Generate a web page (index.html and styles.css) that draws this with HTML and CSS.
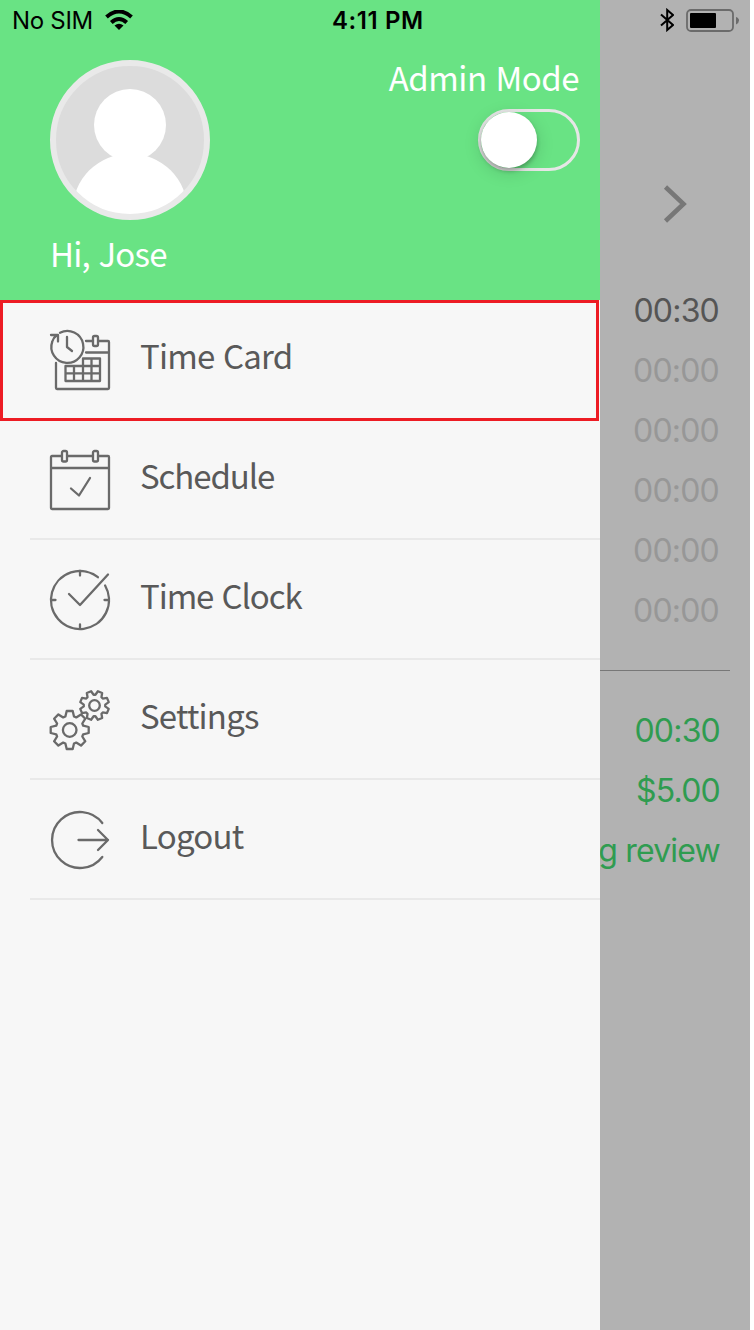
FILE: index.html
```
<!DOCTYPE html>
<html lang="en">
<head>
    <meta charset="UTF-8">
    <meta name="viewport" content="width=device-width, initial-scale=1.0">
    <title>Time Card</title>
    <link rel="stylesheet" href="styles.css">
</head>
<body>
    <div class="screen">
        <!-- Time card page behind the drawer -->
        <main class="page">
            <div class="week-nav">
                <svg class="chevron" viewBox="0 0 24 40"><path d="M2.500 3L20.500 20L2.500 37"/></svg>
            </div>
            <div class="row dark">00:30</div>
            <div class="row">00:00</div>
            <div class="row">00:00</div>
            <div class="row">00:00</div>
            <div class="row">00:00</div>
            <div class="row">00:00</div>
            <hr class="line">
            <div class="row green">00:30</div>
            <div class="row green">$5.00</div>
            <div class="row green">Pending review</div>
        </main>

        <nav class="drawer">
            <header class="profile">
                <div class="user">
                    <svg class="avatar" viewBox="0 0 160 160">
                        <clipPath id="face"><circle cx="80" cy="80" r="75"/></clipPath>
                        <circle cx="80" cy="80" r="77" fill="#dcdcdc"/>
                        <g clip-path="url(#face)" fill="#fff">
                            <circle cx="80" cy="65" r="36"/>
                            <circle cx="80" cy="151" r="57.5"/>
                        </g>
                        <circle cx="80" cy="80" r="77" fill="none" stroke="#e9e9e9" stroke-width="6"/>
                    </svg>
                    <div class="text hello">Hi, Jose</div>
                </div>
                <div class="admin">
                    <div class="text admin-label">Admin Mode</div>
                    <div class="toggle"><div class="knob"></div></div>
                </div>
            </header>

            <div class="menu">
                <a class="item active">
                    <svg class="icon" viewBox="0 0 60 60">
                        <path d="M6 33V58q0 1 1 1H58q1 0 1-1V12q0-1-1-1H49M43 11H36M36 22.500H59"/>
                        <rect x="43" y="6" width="5" height="10" rx="1.500"/>
                        <path d="M33 28.500H50V51H15.500V36H33ZM15.500 43.300H50M24 36V51M33 36V51M41.500 28.500V51M33 36H50"/>
                        <path d="M10 2.700A16 16 0 1 1 2.300 11.500Q3.500 7.500 7 5M1 5H8V11.500M17 7V17L22 21"/>
                    </svg>
                    <span class="text">Time Card</span>
                </a>
                <a class="item">
                    <svg class="icon" viewBox="0 0 60 60">
                        <path d="M11 6H2q-1 0-1 1V58q0 1 1 1H58q1 0 1-1V7q0-1-1-1H49M18 6H43M1 18H59"/>
                        <rect x="12" y="1" width="5" height="10.500" rx="1.500"/>
                        <rect x="43" y="1" width="5" height="10.500" rx="1.500"/>
                        <path d="M21 38.500L29 45.500L40 28"/>
                    </svg>
                    <span class="text tight">Schedule</span>
                </a>
                <a class="item">
                    <svg class="icon" viewBox="0 0 60 60">
                        <path d="M47.900 7.200A29 29 0 1 0 55.100 15.500M30 1V5.500M30 54.500V59M1 30H5.500M54.500 30H59M19 24L30 35L58 4.500"/>
                    </svg>
                    <span class="text tight">Time Clock</span>
                </a>
                <a class="item">
                    <svg class="icon" viewBox="0 0 60 60">
                        <defs>
                            <path id="gear" d="M-3-19H3L4.300-13.500L6.500-12.600L11.300-15.600L15.600-11.300L12.600-6.500L13.500-4.300L19-3V3L13.500 4.300L12.600 6.500L15.600 11.300L11.300 15.600L6.500 12.600L4.300 13.500L3 19H-3L-4.300 13.500L-6.500 12.600L-11.300 15.600L-15.600 11.300L-12.600 6.500L-13.500 4.300L-19 3V-3L-13.500-4.300L-12.600-6.500L-15.600-11.300L-11.300-15.600L-6.500-12.600L-4.300-13.500Z" vector-effect="non-scaling-stroke"/>
                        </defs>
                        <use href="#gear" transform="translate(44.500 15.500) rotate(22.500) scale(.76)"/>
                        <circle cx="44.500" cy="15.500" r="5.300"/>
                        <use class="front" href="#gear" transform="translate(19.700 40)"/>
                        <circle cx="19.700" cy="40" r="6.800"/>
                    </svg>
                    <span class="text">Settings</span>
                </a>
                <a class="item">
                    <svg class="icon" viewBox="0 0 60 60">
                        <path d="M52.300 13A28 28 0 1 0 52.300 47M28.500 30H58M48 20L58 30L48 40"/>
                    </svg>
                    <span class="text">Logout</span>
                </a>
            </div>
        </nav>

        <div class="status">
            <span class="carrier">No SIM</span>
            <svg class="wifi" viewBox="0 0 28 20">
                <path d="M1.500 7Q14-4 26.500 7M6.300 12.500Q14 5.500 21.700 12.500"/>
                <path class="dot" d="M9.500 15.500Q14 12 18.500 15.500L14 20Z"/>
            </svg>
            <span class="clock">4:11 PM</span>
            <svg class="bluetooth" viewBox="0 0 14 24"><path d="M1 6.500L13 17L7.200 22V2L13 7L1 17.500"/></svg>
            <svg class="battery" viewBox="0 0 54 24">
                <rect x="1" y="1" width="46" height="21" rx="4" fill="none" stroke="#6b6b6b" stroke-width="1.800"/>
                <rect x="4" y="4" width="26" height="15" rx="1"/>
                <path d="M50 8Q53 9 53 11.500T50 15.500Z" fill="#6b6b6b"/>
            </svg>
        </div>
    </div>
</body>
</html>
```

FILE: styles.css
```
* {
    box-sizing: border-box;
}

body {
    margin: 0;
    background-color: #fff;
}

.screen {
    position: relative;
    width: 750px;
    height: 1330px;
    background-color: #b2b2b2;
    overflow: hidden;
}

/* page under the drawer */
.page {
    padding: 164px 20px 0 0;
    font-family: Inter, "Liberation Sans", sans-serif;
}

.week-nav {
    display: flex;
    justify-content: flex-end;
    align-items: center;
    height: 80px;
    padding-right: 43px;
    margin-bottom: 37px;
}

.chevron {
    width: 24px;
    height: 40px;
    fill: none;
    stroke: #777;
    stroke-width: 4.6;
}

.row {
    height: 60px;
    padding-right: 11px;
    line-height: 60px;
    font-size: 32px;
    letter-spacing: -0.8px;
    text-align: right;
    color: #979797;
}

.dark {
    color: #555;
}

.green {
    padding-right: 10px;
    line-height: 62px;
    color: #2f9c50;
}

.line {
    height: 1px;
    margin: 29px 0;
    border: none;
    background-color: #777;
}

/* drawer */
.drawer {
    position: absolute;
    top: 0;
    left: 0;
    width: 600px;
    height: 100%;
    background-color: #f7f7f7;
}

.text {
    font-family: "Noto Sans CJK KR", "Open Sans", sans-serif;
    font-size: 33px;
    font-weight: 400;
    line-height: 40px;
    letter-spacing: -0.8px;
    word-spacing: 2px;
    white-space: nowrap;
}

.text.tight {
    letter-spacing: -1.1px;
}

.profile {
    display: flex;
    justify-content: space-between;
    height: 300px;
    padding: 60px 20px 0 50px;
    background-color: #69e384;
    color: #fff;
}

.avatar {
    display: block;
    width: 160px;
    height: 160px;
}

.hello {
    margin-top: 13px;
}

.admin {
    display: flex;
    flex-direction: column;
    align-items: flex-end;
}

.admin-label {
    margin-top: -3px;
    padding-right: 1px;
    letter-spacing: -0.5px;
}

.toggle {
    width: 102px;
    height: 62px;
    margin-top: 12px;
    border: 3px solid #e6e6e6;
    border-radius: 31px;
}

.knob {
    width: 56px;
    height: 56px;
    border-radius: 50%;
    background-color: #fff;
    box-shadow: 0 3px 4px rgba(0, 0, 0, 0.25), 0 4px 18px rgba(0, 0, 0, 0.15);
}

.item {
    display: flex;
    align-items: flex-start;
    gap: 30px;
    height: 120px;
    margin-left: 30px;
    padding: 30px 20px 0;
    border-bottom: 2px solid #e9e9e9;
    color: #595959;
}

.item .text {
    margin-top: 5px;
}

.active {
    width: 599px;
    height: 121px;
    margin: 0 0 -1px;
    padding: 27px 47px 0;
    border: 3px solid #ed1c24;
}

.icon {
    width: 60px;
    height: 60px;
    overflow: visible;
    fill: none;
    stroke: #6a6a6a;
    stroke-width: 2.3;
    stroke-linecap: round;
    stroke-linejoin: round;
}

.front {
    fill: #f7f7f7;
}

/* status bar */
.status {
    position: absolute;
    top: 0;
    left: 0;
    display: flex;
    align-items: center;
    width: 750px;
    height: 40px;
    padding: 0 10px 0 12px;
    font-family: Inter, "Liberation Sans", sans-serif;
    font-size: 24px;
    color: #000;
}

.carrier {
    width: 93px;
    letter-spacing: -0.3px;
}

.wifi {
    width: 28px;
    height: 20px;
    fill: none;
    stroke: #000;
    stroke-width: 4;
}

.wifi .dot {
    fill: #000;
    stroke: none;
}

.clock {
    margin-left: 199px;
    font-weight: 600;
    letter-spacing: 0.6px;
}

.bluetooth {
    width: 14px;
    height: 24px;
    margin-left: auto;
    fill: none;
    stroke: #000;
    stroke-width: 2;
}

.battery {
    width: 54px;
    height: 24px;
    margin: 2px 0 0 12px;
}
```
